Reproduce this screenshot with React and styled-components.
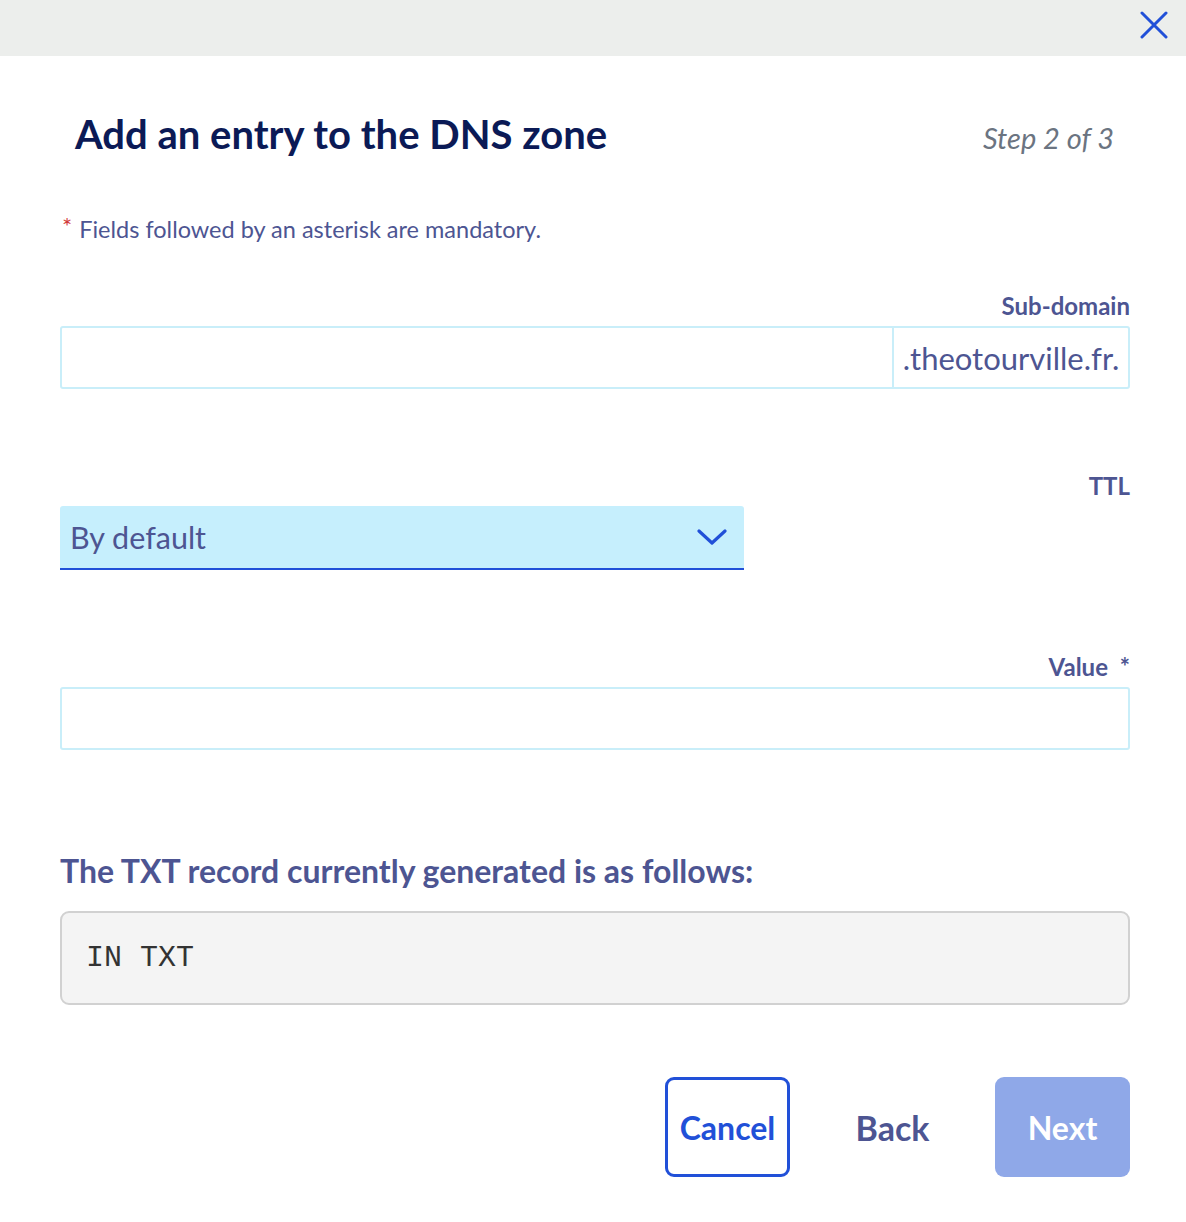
import React from 'react';
import styled, { createGlobalStyle } from 'styled-components';

const GlobalStyle = createGlobalStyle`
  html, body {
    margin: 0;
    padding: 0;
    background: #ffffff;
  }
  body {
    font-family: Lato, "Noto Sans", sans-serif;
    color: #4d5592;
  }
`;

const CloseIcon = () => (
  <svg width="28" height="28" viewBox="0 0 28 28" fill="none">
    <path d="M2 2 L26 26 M26 2 L2 26" stroke="#2150d8" strokeWidth="3" strokeLinecap="round" />
  </svg>
);

const Chevron = () => (
  <svg width="30" height="18" viewBox="0 0 30 18" fill="none">
    <path d="M2 3 L15 15 L28 3" stroke="#2150d8" strokeWidth="3.2" strokeLinecap="round" strokeLinejoin="round" />
  </svg>
);

export default function App() {
  return (
    <>
      <GlobalStyle />
      <Modal>
        <TopBar>
          <CloseButton aria-label="Close">
            <CloseIcon />
          </CloseButton>
        </TopBar>
        <Body>
          <Header>
            <Title>Add an entry to the DNS zone</Title>
            <Step>Step 2 of 3</Step>
          </Header>

          <Mandatory>
            <Star>*</Star> Fields followed by an asterisk are mandatory.
          </Mandatory>

          <Field top={51}>
            <Label>Sub-domain</Label>
            <InputGroup>
              <TextInput />
              <Suffix>.theotourville.fr.</Suffix>
            </InputGroup>
          </Field>

          <Field>
            <Label>TTL</Label>
            <Select>
              <span>By default</span>
              <Chevron />
            </Select>
          </Field>

          <Field>
            <Label>
              Value <LabelStar>*</LabelStar>
            </Label>
            <InputGroup>
              <TextInput />
            </InputGroup>
          </Field>

          <RecordTitle>The TXT record currently generated is as follows:</RecordTitle>
          <RecordBox>IN TXT</RecordBox>

          <Actions>
            <CancelButton>Cancel</CancelButton>
            <BackButton>Back</BackButton>
            <NextButton disabled>Next</NextButton>
          </Actions>
        </Body>
      </Modal>
    </>
  );
}

const Modal = styled.div`
  width: 1186px;
  min-height: 1222px;
  display: flex;
  flex-direction: column;
  background: #fff;
`;

const TopBar = styled.div`
  height: 56px;
  background: #eceeec;
  display: flex;
  justify-content: flex-end;
  align-items: flex-start;
`;

const CloseButton = styled.button`
  border: none;
  background: transparent;
  padding: 0;
  margin: 10px 17px 0 0;
  width: 30px;
  height: 30px;
  display: flex;
  align-items: center;
  justify-content: center;
  cursor: pointer;
`;

const Body = styled.div`
  padding: 0 56px 0 60px;
  display: flex;
  flex-direction: column;
`;

const Header = styled.div`
  display: flex;
  justify-content: space-between;
  align-items: baseline;
  padding: 53px 16px 0 15px;
`;

const Title = styled.h1`
  margin: 0;
  font-size: 40px;
  font-weight: 700;
  line-height: 50px;
  color: #0b1a56;
`;

const Step = styled.span`
  font-size: 29px;
  font-style: italic;
  color: #6b7481;
`;

const Mandatory = styled.p`
  margin: 55px 0 0 2px;
  font-size: 23.5px;
  line-height: 30px;
  color: #4d5592;
`;

const Star = styled.span`
  color: #d23b3b;
  font-size: 24px;
  line-height: 24px;
  vertical-align: top;
  margin-right: 1px;
`;

const Field = styled.div`
  margin-top: ${(p) => p.top || 86}px;
  display: flex;
  flex-direction: column;
  gap: 9px;
`;

const Label = styled.label`
  align-self: flex-end;
  font-size: 24px;
  font-weight: 700;
  line-height: 22px;
  color: #4d5592;
`;

const LabelStar = styled.span`
  margin-left: 6px;
`;

const InputGroup = styled.div`
  height: 63px;
  box-sizing: border-box;
  border: 2px solid #c9eef9;
  border-radius: 3px;
  display: flex;
`;

const TextInput = styled.input`
  flex: 1;
  border: none;
  outline: none;
  background: transparent;
  font: inherit;
`;

const Suffix = styled.div`
  width: 236px;
  box-sizing: border-box;
  border-left: 2px solid #c9eef9;
  display: flex;
  align-items: center;
  justify-content: center;
  font-size: 31px;
  color: #4d5592;
`;

const Select = styled.div`
  width: 684px;
  height: 64px;
  box-sizing: border-box;
  background: #c6effd;
  border-bottom: 2px solid #2150d8;
  border-radius: 3px 3px 0 0;
  display: flex;
  align-items: center;
  justify-content: space-between;
  padding: 0 17px 0 10px;
  font-size: 30.5px;
  color: #4d5592;
`;

const RecordTitle = styled.h2`
  margin: 103px 0 0;
  font-size: 32px;
  font-weight: 700;
  line-height: 36px;
  color: #4d5592;
`;

const RecordBox = styled.div`
  margin-top: 22px;
  height: 94px;
  box-sizing: border-box;
  background: #f4f4f4;
  border: 2px solid #d1d1d1;
  border-radius: 9px;
  padding: 0 24px;
  display: flex;
  align-items: center;
  font-family: "Liberation Mono", "DejaVu Sans Mono", monospace;
  font-size: 30px;
  color: #333;
`;

const Actions = styled.div`
  margin-top: 72px;
  display: flex;
  justify-content: flex-end;
  align-items: center;
`;

const ButtonBase = styled.button`
  height: 100px;
  box-sizing: border-box;
  border-radius: 9px;
  font-family: inherit;
  font-size: 32px;
  font-weight: 700;
  cursor: pointer;
  padding: 0;
`;

const CancelButton = styled(ButtonBase)`
  width: 125px;
  border: 3px solid #2150d8;
  background: #fff;
  color: #2150d8;
`;

const BackButton = styled(ButtonBase)`
  width: 205px;
  border: none;
  background: transparent;
  color: #4d5592;
  font-size: 34px;
`;

const NextButton = styled(ButtonBase)`
  width: 135px;
  border: none;
  background: #8fa8e8;
  color: #fff;
  cursor: default;
`;
